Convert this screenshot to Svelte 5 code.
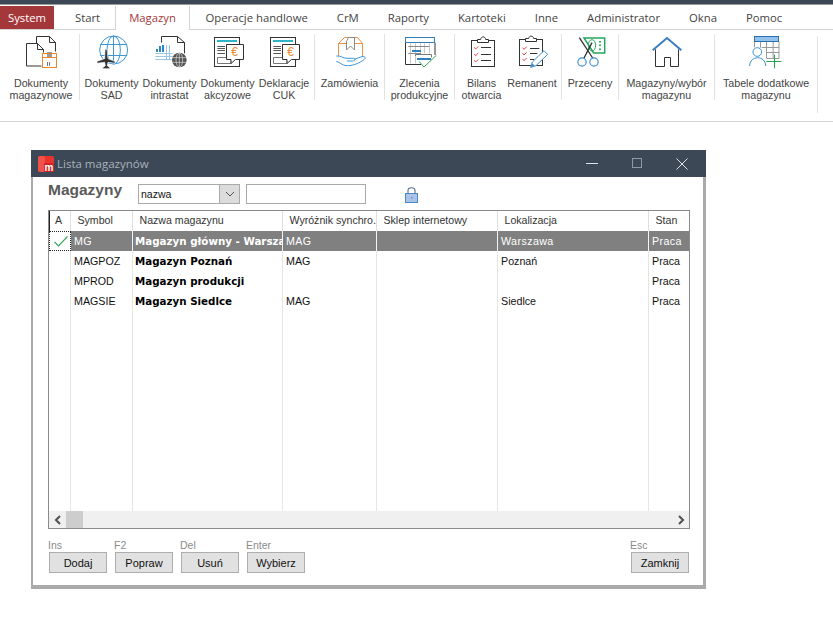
<script>
  const tabs = ['Start', 'Magazyn', 'Operacje handlowe', 'CrM', 'Raporty', 'Kartoteki', 'Inne', 'Administrator', 'Okna', 'Pomoc'];

  const groups = [
    [{ icon: 'docbox', width: 66, text: ['Dokumenty', 'magazynowe'] }],
    [
      { icon: 'globe', width: 53, text: ['Dokumenty', 'SAD'] },
      { icon: 'intrastat', width: 53, text: ['Dokumenty', 'intrastat'] },
      { icon: 'euro', width: 53, text: ['Dokumenty', 'akcyzowe'] },
      { icon: 'euro', width: 50, text: ['Deklaracje', 'CUK'] }
    ],
    [{ icon: 'order', width: 59, text: ['Zamówienia'] }],
    [{ icon: 'gantt', width: 59, text: ['Zlecenia', 'produkcyjne'] }],
    [
      { icon: 'clip', width: 43, text: ['Bilans', 'otwarcia'] },
      { icon: 'clipPen', width: 48, text: ['Remanent'] }
    ],
    [{ icon: 'scissors', width: 46, text: ['Przeceny'] }],
    [{ icon: 'home', width: 85, text: ['Magazyny/wybór', 'magazynu'] }],
    [{ icon: 'tablePlus', width: 92, text: ['Tabele dodatkowe', 'magazynu'] }]
  ];

  const columns = ['A', 'Symbol', 'Nazwa magazynu', 'Wyróżnik synchro.', 'Sklep internetowy', 'Lokalizacja', 'Stan'];

  const rows = [
    { symbol: 'MG', name: 'Magazyn główny - Warszawa', tag: 'MAG', place: 'Warszawa', active: true },
    { symbol: 'MAGPOZ', name: 'Magazyn Poznań', tag: 'MAG', place: 'Poznań' },
    { symbol: 'MPROD', name: 'Magazyn produkcji', tag: '', place: '' },
    { symbol: 'MAGSIE', name: 'Magazyn Siedlce', tag: 'MAG', place: 'Siedlce' }
  ];

  const actions = [
    { key: 'Ins', label: 'Dodaj' },
    { key: 'F2', label: 'Popraw' },
    { key: 'Del', label: 'Usuń' },
    { key: 'Enter', label: 'Wybierz' }
  ];
</script>

{#snippet ribbonIcon(name)}
  {#if name === 'docbox'}
    <svg class="icon" viewBox="69 102 108 108">
      <g fill="none" stroke="#333" stroke-width="3">
        <path d="M109.5 130.5V109.5H148.5L166.5 127.5V154.5" />
        <path d="M148.5 109.5V127.5H166.5" />
        <path d="M79.5 130.5H112.5L130.5 148.5V157.5M79.5 130.5V198H124.5" />
        <path d="M112.5 130.5V148.5H130.5" />
      </g>
      <rect x="141" y="156" width="15" height="15" fill="#9a9a9a" />
      <g fill="none" stroke="#e8872c" stroke-width="3">
        <rect x="127.5" y="160.5" width="42" height="42" />
        <path d="M127.5 172.5H169.5" />
      </g>
      <path d="M142.5 186V198M148.5 186V198" stroke="#777" stroke-width="3" />
    </svg>
  {:else if name === 'globe'}
    <svg class="icon" viewBox="279 102 108 108">
      <g fill="none" stroke="#3d97d8" stroke-width="3">
        <circle cx="338" cy="150" r="42" />
        <ellipse cx="338" cy="150" rx="20" ry="42" />
        <path d="M337.5 108V192M298 133.5H378M298 166.5H378" />
      </g>
      <path d="M312 148h6l3 28 21 8v6l-21-3-2 10 8 6v3h-22v-3l8-6-2-10-23 3v-6l23-8z" fill="#333" stroke="#fff" stroke-width="2" />
    </svg>
  {:else if name === 'intrastat'}
    <svg class="icon" viewBox="453 102 108 108">
      <g fill="none" stroke="#333" stroke-width="3">
        <path d="M481.5 127.5V109.5H529.5L550.5 127.5V160" />
        <path d="M529.5 109.5V127.5H550.5" />
      </g>
      <path d="M465 147h6v9h-6zM474 138h6v18h-6zM483 135h6v21h-6z" fill="#2f86c9" />
      <g stroke="#9cc6e6" stroke-width="3" fill="none">
        <path d="M463 160.5H515M463 169.5H515M463 178.5H512M496.5 135V180M505.5 135V180" />
      </g>
      <circle cx="535" cy="180" r="22" fill="#555" />
      <g fill="none" stroke="#fff" stroke-width="1.6">
        <ellipse cx="535" cy="180" rx="10" ry="21" />
        <path d="M514 173H556M514 187H556M535 159V201" />
      </g>
    </svg>
  {:else if name === 'euro'}
    <svg class="icon" viewBox="627 102 108 108">
      <rect x="640.5" y="112.5" width="75" height="87" fill="#fff" stroke="#333" stroke-width="3" />
      <rect x="648" y="120" width="60" height="6" fill="#2eb6c8" />
      <path d="M649 139.5H672M649 145.5H672M649 151.5H672M649 160.5H672" stroke="#555" stroke-width="3" />
      <path d="M649.5 190.5V172.5H690V190.5Z" fill="none" stroke="#777" stroke-width="3" />
      <path d="M676.5 133.5H727.5V178.5H703.5L690 190.5V178.5H676.5Z" fill="#fff" stroke="#333" stroke-width="3" />
      <text x="701" y="168" class="euro-sign">€</text>
    </svg>
  {:else if name === 'order'}
    <svg class="icon" viewBox="63 102 108 108">
      <g fill="none" stroke="#ec9245" stroke-width="3">
        <path d="M82.5 172V130.5L100.5 112.5H139.5L154.5 130.5V172" />
        <path d="M82.5 130.5H154.5" />
      </g>
      <path d="M106.5 150V124L112.5 112.5H130.5V150L118.5 138Z" fill="#fff" stroke="#8a8a8a" stroke-width="3" />
      <path d="M76 168C88 166 96 175 108 175H128C134 175 134 183 124 183H108M130 178L152 170C162 168 166 174 160 178C145 190 125 198 105 197C95 196 88 188 76 184" fill="#fff" stroke="#3d97d8" stroke-width="3" />
    </svg>
  {:else if name === 'gantt'}
    <svg class="icon" viewBox="273 102 108 108">
      <path d="M283.5 128V193.5H330M372 128V165" fill="none" stroke="#333" stroke-width="3" />
      <rect x="283.5" y="112.5" width="87" height="15" fill="#fff" stroke="#2f7fc1" stroke-width="3" />
      <path d="M298.5 130V190M313.5 130V190M328.5 130V160M340.5 130V160M355.5 130V160" stroke="#c8c8c8" stroke-width="3" />
      <path d="M292 139.5H355M292 160.5H330" stroke="#888" stroke-width="3" />
      <rect x="303" y="150" width="27" height="6" fill="#2f7fc1" />
      <path d="M313.5 168V163.5H361.5V172" fill="#fff" stroke="#777" stroke-width="3" />
      <rect x="318" y="174" width="42" height="6" fill="#2f7fc1" />
      <path d="M324 184L339 201L376 166" fill="none" stroke="#33a852" stroke-width="3" />
    </svg>
  {:else if name === 'clip' || name === 'clipPen'}
    <svg class="icon" viewBox={name === 'clip' ? '459 102 108 108' : '612 102 108 108'}>
      {#if name === 'clip'}
        <rect x="481.5" y="121.5" width="69" height="78" fill="#fff" stroke="#333" stroke-width="3" />
        <path d="M499.5 127.5V118.5H509C510 108 523 108 524 118.5H532.5V127.5Z" fill="#fff" stroke="#333" stroke-width="3" />
        <path d="M510 142.5H540M510 163.5H540M510 181.5H540" stroke="#333" stroke-width="3" />
        <path d="M490 142l4 5 8-8M490 162l4 5 8-8M490 181l4 5 8-8" fill="none" stroke="#e8454a" stroke-width="3" />
      {:else}
        <rect x="628.5" y="118.5" width="69" height="78" fill="#fff" stroke="#333" stroke-width="3" />
        <path d="M646.5 124.5V115.5H656C657 106 670 106 671 115.5H679.5V124.5Z" fill="#fff" stroke="#333" stroke-width="3" />
        <path d="M660 145.5H688M660 160.5H682M660 178.5H672" stroke="#333" stroke-width="3" />
        <path d="M638 143l4 5 8-8M638 160l4 5 8-8M638 177l4 5 8-8" fill="none" stroke="#e8454a" stroke-width="3" />
        <path d="M662 202L667 186L702 152L713 163L678 197Z" fill="#fff" stroke="#3d8fd0" stroke-width="3" />
        <path d="M662 202L667 190L674 197Z" fill="#3d8fd0" />
      {/if}
    </svg>
  {:else if name === 'scissors'}
    <svg class="icon" viewBox="786 102 108 108">
      <path d="M822 114H884V159H851Z" fill="#fff" stroke="#23a65b" stroke-width="4.5" />
      <ellipse cx="846" cy="136" rx="11" ry="17" fill="none" stroke="#23a65b" stroke-width="3" />
      <circle cx="870" cy="125" r="3" fill="#23a65b" />
      <circle cx="870" cy="136" r="3" fill="#23a65b" />
      <circle cx="870" cy="148" r="3" fill="#23a65b" />
      <path d="M808 113L848 174M846 128L822 174" stroke="#333" stroke-width="4" fill="none" />
      <circle cx="816" cy="186" r="12.5" fill="#fff" stroke="#3d8fd0" stroke-width="3.5" />
      <circle cx="852" cy="186" r="12.5" fill="#fff" stroke="#3d8fd0" stroke-width="3.5" />
    </svg>
  {:else if name === 'home'}
    <svg class="icon" viewBox="147 102 108 108">
      <path d="M166.5 148V199.5H193.5V172.5H211.5V199.5H235.5V148" fill="none" stroke="#333" stroke-width="3" />
      <path d="M158 151L201 114L244 151" fill="none" stroke="#3a7fc4" stroke-width="6" />
    </svg>
  {:else if name === 'tablePlus'}
    <svg class="icon" viewBox="444 102 108 108">
      <path d="M463.5 142V125M537 125V175.5H500M481.5 125V143M499.5 125V175M519.5 125V175M485 142.5H537M500 157.5H537" fill="none" stroke="#999" stroke-width="3" />
      <rect x="463.5" y="109.5" width="72" height="15" fill="#93c3ea" stroke="#2a6fb0" stroke-width="3" />
      <path d="M449 198C449 165 497 165 497 198" fill="#fff" stroke="#3d8fd0" stroke-width="3" />
      <circle cx="472" cy="156" r="13" fill="#fff" stroke="#3d8fd0" stroke-width="3" />
      <path d="M523.5 164V205M499 184.5H544" stroke="#1fa650" stroke-width="3" />
    </svg>
  {/if}
{/snippet}

<div class="app">
  <div class="topbar"></div>

  <nav class="tabs">
    <div class="tab system">System</div>
    {#each tabs as tab}
      <div class="tab" class:start={tab === 'Start'} class:active={tab === 'Magazyn'}>{tab}</div>
    {/each}
  </nav>

  <div class="ribbon">
    {#each groups as group}
      <div class="group">
        {#each group as item}
          <div class="item" style="width: {item.width}px">
            {@render ribbonIcon(item.icon)}
            <div class="item-label">
              {#each item.text as line}
                <span>{line}</span>
              {/each}
            </div>
          </div>
        {/each}
      </div>
    {/each}
  </div>

  <section class="window">
    <header class="titlebar">
      <svg class="app-logo" viewBox="0 0 16 16">
        <rect width="16" height="16" rx="2" fill="#e8332f" />
        <rect width="7" height="16" rx="2" fill="#f0524a" />
        <rect x="6" y="7" width="10" height="9" rx="1" fill="#cf2420" />
        <text x="11" y="15" class="logo-m">m</text>
      </svg>
      <span class="title">Lista magazynów</span>
      <div class="controls">
        <svg viewBox="0 0 12 12"><path d="M0 5.5H12" stroke="#dfe3e7" /></svg>
        <svg viewBox="0 0 12 12"><rect x="1.5" y="0.5" width="9" height="9" fill="none" stroke="#8f98a3" /></svg>
        <svg viewBox="0 0 12 12"><path d="M0.5 0.5L11.5 11.5M11.5 0.5L0.5 11.5" stroke="#dfe3e7" /></svg>
      </div>
    </header>

    <div class="body">
      <div class="toolbar">
        <h1>Magazyny</h1>
        <div class="combo">
          <span>nazwa</span>
          <div class="combo-btn">
            <svg viewBox="0 0 10 6" width="10" height="6"><path d="M1 1L5 5L9 1" fill="none" stroke="#555" /></svg>
          </div>
        </div>
        <div class="search"></div>
        <svg class="lock" viewBox="0 0 13 17" width="13" height="17">
          <path d="M3 8V4.5C3 .8 10 .8 10 4.5V8" fill="none" stroke="#5a6f8a" stroke-width="1.1" />
          <rect x=".5" y="7.5" width="12" height="9" fill="#a9c4e6" stroke="#4a86c8" />
          <rect x="6" y="11" width="1.5" height="1.5" fill="#6a8fbf" />
        </svg>
      </div>

      <div class="table">
        <div class="row head">
          {#each columns as col, i}
            <div class="cell" class:first={i === 0}>{col}</div>
          {/each}
        </div>

        {#each rows as row}
          <div class="row" class:selected={row.active}>
            <div class="cell check">
              {#if row.active}
                <svg viewBox="0 0 14 11" width="14" height="11"><path d="M.5 6L4.5 10L13.5 .5" fill="none" stroke="#3aa860" stroke-width="1.2" /></svg>
              {/if}
            </div>
            <div class="cell">{row.symbol}</div>
            <div class="cell name">{row.name}</div>
            <div class="cell">{row.tag}</div>
            <div class="cell"></div>
            <div class="cell">{row.place}</div>
            <div class="cell">Praca</div>
          </div>
        {/each}

        <div class="row filler">
          {#each columns as col}
            <div class="cell"></div>
          {/each}
        </div>

        <div class="scrollbar">
          <svg viewBox="0 0 8 10" width="8" height="10"><path d="M6 1L2 5L6 9" fill="none" stroke="#505050" stroke-width="2" /></svg>
          <div class="thumb"></div>
          <svg class="right" viewBox="0 0 8 10" width="8" height="10"><path d="M2 1L6 5L2 9" fill="none" stroke="#505050" stroke-width="2" /></svg>
        </div>
      </div>

      <footer class="actions">
        {#each actions as action}
          <div class="action">
            <span>{action.key}</span>
            <button>{action.label}</button>
          </div>
        {/each}
        <div class="action close">
          <span>Esc</span>
          <button>Zamknij</button>
        </div>
      </footer>
    </div>
  </section>
</div>

<style>
  :global(body) {
    margin: 0;
    background: #fff;
  }

  .app {
    width: 833px;
    height: 626px;
    overflow: hidden;
    font-family: "Liberation Sans", Arial, sans-serif;
    color: #111;
  }

  .topbar {
    height: 4px;
    background: #3c4856;
    border-bottom: 1px solid #9a9a9a;
  }

  .tabs {
    display: flex;
    height: 23px;
    padding-top: 1px;
    border-bottom: 1px solid #d4d4d4;
    font-family: "Open Sans", sans-serif;
    font-size: 11.3px;
    color: #444;
  }

  .tab {
    padding: 0 14.5px;
    line-height: 23px;
    white-space: nowrap;
  }

  .tab.system {
    width: 54px;
    box-sizing: border-box;
    padding: 0;
    text-align: center;
    background: #a4373a;
    color: #fff;
  }

  .tab.start {
    box-sizing: border-box;
    width: 61px;
    padding: 0 0 0 21px;
  }

  .tab.active {
    box-sizing: border-box;
    width: 75px;
    height: 24px;
    padding: 0;
    margin-right: 1px;
    text-align: center;
    border-left: 1px solid #d4d4d4;
    border-right: 1px solid #d4d4d4;
    background: #fff;
    color: #a4373a;
  }

  .ribbon {
    display: flex;
    height: 91px;
    border-bottom: 1px solid #d4d4d4;
    padding-left: 3px;
    font-size: 10.7px;
    color: #444;
  }

  .group {
    display: flex;
    gap: 5px;
    height: 66px;
    margin-top: 4px;
    padding: 0 5px;
    border-right: 1px solid #e2e2e2;
  }

  .group:last-child {
    height: 77px;
    margin-top: 6px;
  }

  .item {
    display: flex;
    flex-direction: column;
    align-items: center;
  }

  .group:last-child .item {
    margin-top: -2px;
  }

  .icon {
    width: 36px;
    height: 36px;
    flex: none;
  }

  .item-label {
    display: flex;
    flex-direction: column;
    align-items: center;
    margin-top: 7px;
    line-height: 12px;
    white-space: nowrap;
  }

  .euro-sign {
    font-family: "Liberation Sans", sans-serif;
    font-size: 36px;
    fill: #ee8a2e;
    text-anchor: middle;
  }

  .window {
    box-sizing: border-box;
    width: 675px;
    height: 439px;
    margin: 28px 0 0 31px;
    border: solid #aaa;
    border-width: 0 3px 4px 2px;
    display: flex;
    flex-direction: column;
  }

  .titlebar {
    display: flex;
    align-items: center;
    flex: none;
    height: 27px;
    margin: 0 -3px 0 -2px;
    padding-left: 7px;
    background: #3c4856;
    color: #a9b1bb;
    font-family: "Open Sans", sans-serif;
    font-size: 11.5px;
  }

  .app-logo {
    width: 16px;
    height: 16px;
    margin-right: 3px;
  }

  .logo-m {
    font-family: "Liberation Sans", sans-serif;
    font-size: 10px;
    font-weight: 700;
    fill: #fff;
    text-anchor: middle;
  }

  .title {
    flex: 1;
  }

  .controls {
    display: flex;
    gap: 33px;
    padding-right: 18px;
  }

  .controls svg {
    width: 12px;
    height: 12px;
  }

  .body {
    flex: 1;
    display: flex;
    flex-direction: column;
    padding: 7px 13px 0 15px;
  }

  .toolbar {
    display: flex;
    height: 20px;
    margin-bottom: 6px;
  }

  h1 {
    width: 90px;
    margin: -3px 0 0;
    font-size: 15.5px;
    font-weight: 700;
    color: #5a5a5a;
    line-height: 18px;
  }

  .combo {
    box-sizing: border-box;
    width: 102px;
    height: 20px;
    display: flex;
    align-items: center;
    justify-content: space-between;
    border: 1px solid #aaa;
    font-size: 10.5px;
    padding-left: 2px;
  }

  .combo-btn {
    width: 19px;
    height: 18px;
    display: flex;
    align-items: center;
    justify-content: center;
    background: #dcdcdc;
    border-left: 1px solid #aaa;
  }

  .search {
    box-sizing: border-box;
    width: 120px;
    height: 20px;
    margin-left: 6px;
    border: 1px solid #aaa;
  }

  .lock {
    margin: 2px 0 0 39px;
  }

  .table {
    box-sizing: border-box;
    height: 319px;
    display: flex;
    flex-direction: column;
    border: 1px solid #8a8a8a;
    font-size: 10.7px;
  }

  .row {
    display: grid;
    grid-template-columns: 22px 62px 150px 94px 121px 151px 40px;
    height: 20px;
    flex: none;
  }

  .cell {
    box-sizing: border-box;
    padding: 0 0 0 3px;
    line-height: 20px;
    white-space: nowrap;
    overflow: hidden;
    border-right: 1px solid #e6e6de;
  }

  .cell:last-child {
    border-right: 0;
  }

  .head {
    height: 20px;
    color: #333;
    font-size: 10.6px;
  }

  .head .cell {
    padding-left: 6.5px;
    line-height: 19px;
    border-right-color: #dedede;
  }

  .head .cell.first {
    border-left: 1px solid #222;
    padding-left: 5px;
  }

  .name {
    font-family: "DejaVu Sans", sans-serif;
    font-size: 10.3px;
    font-weight: 700;
    padding-left: 2px;
    color: #000;
  }

  .selected .cell:not(.check) {
    background: #808080;
    color: #fff;
  }

  .selected .cell {
    letter-spacing: 0.4px;
    border-right-color: #f4f4f4;
  }

  .selected .name {
    letter-spacing: 0;
  }

  .check {
    display: flex;
    align-items: center;
    padding-left: 4px;
  }

  .selected .check {
    border: 1px dotted #222;
  }

  .filler {
    flex: 1;
    height: auto;
  }

  .scrollbar {
    display: flex;
    align-items: center;
    height: 17px;
    flex: none;
    background: #f0f0f0;
    padding-left: 5px;
  }

  .thumb {
    width: 17px;
    height: 17px;
    margin-left: 4px;
    background: #cdcdcd;
  }

  .right {
    margin-left: auto;
    margin-right: 4px;
  }

  .actions {
    display: flex;
    gap: 8px;
    margin-top: 10px;
  }

  .action {
    display: flex;
    flex-direction: column;
    width: 58px;
    margin-left: 0;
    font-size: 10.5px;
  }

  .action:first-child {
    margin-left: 1px;
  }

  .action span {
    margin-left: -1px;
    line-height: 13px;
    color: #8a8a8a;
  }

  .action.close {
    margin-left: auto;
    margin-right: 1px;
  }

  button {
    box-sizing: border-box;
    width: 58px;
    height: 21px;
    padding: 0;
    border: 1px solid #adadad;
    background: #e1e1e1;
    font-family: "Liberation Sans", Arial, sans-serif;
    font-size: 11px;
    color: #111;
  }
</style>
